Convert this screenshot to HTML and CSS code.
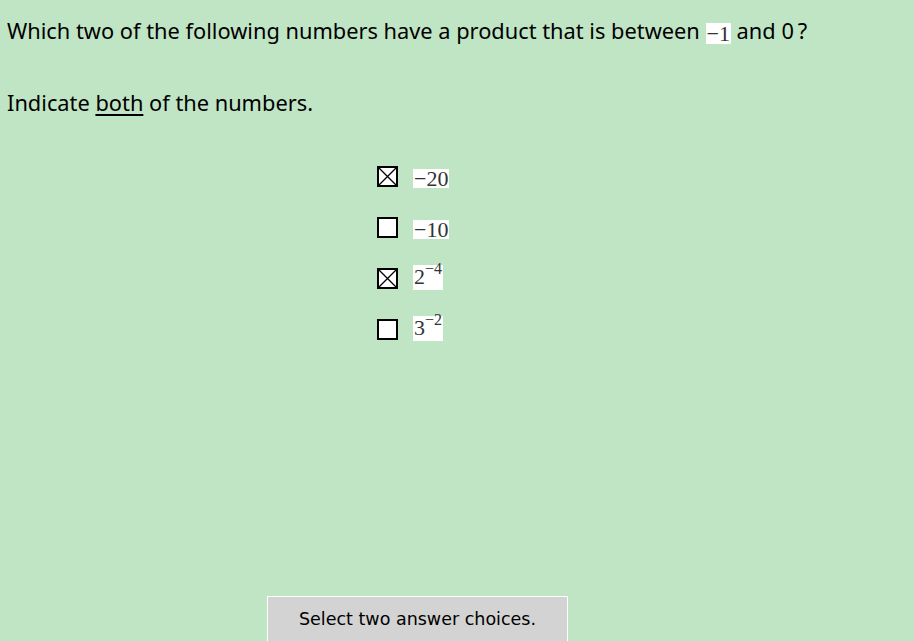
FILE: index.html
```html
<!DOCTYPE html>
<html>
<head>
<meta charset="utf-8">
<link rel="stylesheet" href="styles.css">
</head>
<body>
<div class="page">
  <p class="stem">Which two of the following numbers have a product that is between <span class="math inline">−1</span> and 0<span class="q">?</span></p>
  <p class="instr">Indicate <u>both</u> of the numbers.</p>
  <div class="choices">
    <div class="choice">
      <svg class="box" viewBox="0 0 21 21" width="21" height="21"><rect x="1" y="1" width="19" height="19" fill="#fff" stroke="#000" stroke-width="2"/><path d="M1.5 1.5L19.5 19.5M19.5 1.5L1.5 19.5" stroke="#000" stroke-width="1.3"/></svg>
      <span class="math num">−20</span>
    </div>
    <div class="choice">
      <svg class="box" viewBox="0 0 21 21" width="21" height="21"><rect x="1" y="1" width="19" height="19" fill="#fff" stroke="#000" stroke-width="2"/></svg>
      <span class="math num">−10</span>
    </div>
    <div class="choice">
      <svg class="box" viewBox="0 0 21 21" width="21" height="21"><rect x="1" y="1" width="19" height="19" fill="#fff" stroke="#000" stroke-width="2"/><path d="M1.5 1.5L19.5 19.5M19.5 1.5L1.5 19.5" stroke="#000" stroke-width="1.3"/></svg>
      <span class="math pow">2<sup>−4</sup></span>
    </div>
    <div class="choice">
      <svg class="box" viewBox="0 0 21 21" width="21" height="21"><rect x="1" y="1" width="19" height="19" fill="#fff" stroke="#000" stroke-width="2"/></svg>
      <span class="math pow">3<sup>−2</sup></span>
    </div>
  </div>
  <div class="footer">
    <div class="hint">Select two answer choices.</div>
  </div>
</div>
</body>
</html>
```

FILE: styles.css
```css
html, body {
  margin: 0;
  padding: 0;
  background: #c0e5c5;
  height: 100%;
  overflow: hidden;
}
.page {
  height: 641px;
  display: flex;
  flex-direction: column;
  font-family: "Noto Sans", "Open Sans", sans-serif;
  color: #000;
}
.stem {
  margin: 17px 0 0 7px;
  font-size: 21.8px;
  line-height: 28px;
}
.instr {
  margin: 44px 0 0 7px;
  font-size: 21.8px;
  line-height: 28px;
}
.instr u {
  text-underline-offset: 3px;
}
.q {
  margin-left: 4px;
}
.math {
  font-family: "Liberation Serif", serif;
  color: #333;
  background: #fff;
}
.inline {
  display: inline-block;
  font-size: 22px;
  line-height: 21px;
  padding: 0 1px;
  vertical-align: -2px;
}
.choices {
  margin: 49px 0 0 377px;
  display: flex;
  flex-direction: column;
  gap: 30px;
}
.choice {
  display: flex;
  align-items: center;
  gap: 15px;
  height: 21px;
}
.box {
  display: block;
  flex: none;
}
.num {
  font-size: 22px;
  line-height: 19px;
  height: 19px;
  padding: 0 1px;
  margin-top: 3px;
}
.pow {
  font-size: 22px;
  line-height: 24px;
  height: 25px;
  padding: 0 1px;
  margin-top: -2px;
}
.pow sup {
  font-size: 16px;
  vertical-align: 10px;
  line-height: 0;
}
.footer {
  margin-top: auto;
  display: flex;
  padding-left: 267px;
}
.hint {
  width: 301px;
  height: 45px;
  box-sizing: border-box;
  background: #d3d3d3;
  border: 1px solid #fff;
  border-bottom: none;
  font-family: "DejaVu Sans", Verdana, sans-serif;
  font-size: 17.5px;
  display: flex;
  align-items: center;
  justify-content: center;
  color: #000;
}
```
